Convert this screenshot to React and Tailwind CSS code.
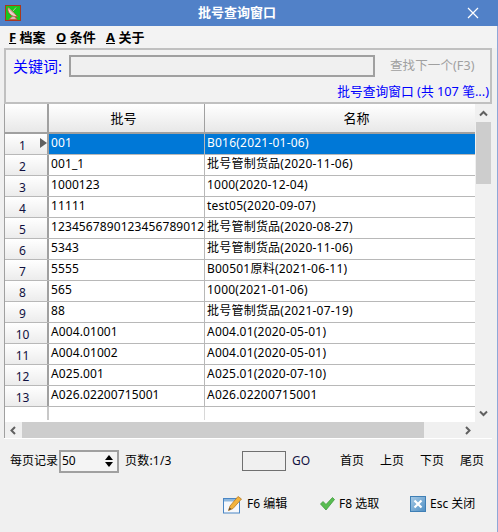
import React from "react";

const rows = [
  ["001", "B016(2021-01-06)"],
  ["001_1", "批号管制货品(2020-11-06)"],
  ["1000123", "1000(2020-12-04)"],
  ["11111", "test05(2020-09-07)"],
  ["1234567890123456789012", "批号管制货品(2020-08-27)"],
  ["5343", "批号管制货品(2020-11-06)"],
  ["5555", "B00501原料(2021-06-11)"],
  ["565", "1000(2021-01-06)"],
  ["88", "批号管制货品(2021-07-19)"],
  ["A004.01001", "A004.01(2020-05-01)"],
  ["A004.01002", "A004.01(2020-05-01)"],
  ["A025.001", "A025.01(2020-07-10)"],
  ["A026.02200715001", "A026.02200715001"],
];

const font = { fontFamily: '"Noto Sans", "Noto Sans CJK SC", sans-serif' };

const DishIcon = () => (
  <svg width="16" height="16" viewBox="0 0 16 16">
    <rect x="0.5" y="0.5" width="15" height="15" fill="#17c81c" stroke="#a8381f" />
    <path d="M3 2.5 C2 7 6 12.5 12.5 11.5 Z" fill="#e6d2cc" stroke="#d0443c" strokeWidth="0.8" />
    <path d="M3.5 3 L9 8.5 M11 2.5 L8 6" stroke="#c9a7a0" strokeWidth="1" fill="none" />
    <path d="M7 11.5 L4 14.5 H12 L10 12" fill="#d8b8b0" stroke="#d0443c" strokeWidth="0.8" />
  </svg>
);

const EditIcon = () => (
  <svg width="19" height="19" viewBox="0 0 19 19">
    <rect x="0.5" y="3.5" width="16" height="14.5" fill="#f6f8fb" stroke="#4a86c4" />
    <rect x="1" y="4" width="15" height="2.5" fill="#8db7de" />
    <path d="M5.5 15.5 L7 11 L15 1.5 L18.5 4 L10 13.5 Z" fill="#f2b33c" stroke="#b87a22" strokeWidth="0.8" />
    <path d="M5.5 15.5 L6.5 12.5 L8.5 14 Z" fill="#5a4a3a" />
  </svg>
);

const CheckIcon = () => (
  <svg width="15" height="14" viewBox="0 0 15 14">
    <path d="M0.5 7 L3 4.5 L6 7.5 L12.5 0.5 L14.5 2.5 L6 13 Z" fill="#58bd50" stroke="#3f9a3c" strokeWidth="0.8" />
  </svg>
);

const CloseBoxIcon = () => (
  <svg width="16" height="16" viewBox="0 0 16 16">
    <defs>
      <linearGradient id="closeBg" x1="0" y1="0" x2="1" y2="1">
        <stop offset="0" stopColor="#a8cbe6" />
        <stop offset="1" stopColor="#4f8fc4" />
      </linearGradient>
    </defs>
    <rect x="0.5" y="0.5" width="15" height="15" fill="url(#closeBg)" stroke="#3f7fb5" />
    <path d="M4.5 4.5 L11.5 11.5 M11.5 4.5 L4.5 11.5" stroke="#fff" strokeWidth="2.2" />
  </svg>
);

const Chevron = ({ d }) => (
  <svg width="9" height="9" viewBox="0 0 9 9">
    <path d={d} fill="none" stroke="#606060" strokeWidth="2" />
  </svg>
);

const MenuItem = ({ k, label, className }) => (
  <span className={`font-bold text-[13px] text-black ${className}`}>
    <span className="underline">{k}</span> {label}
  </span>
);

const App = () => {
  return (
    <div className="w-[498px] h-[532px] bg-[#f0f0f0] flex flex-col overflow-hidden text-xs text-black" style={font}>
      {/* Title bar */}
      <div className="h-[26px] shrink-0 bg-[#5181c8] flex items-center pl-[5px] pr-[19px]">
        <DishIcon />
        <div className="flex-1 text-center text-white font-bold text-[13px] pr-[14px]">批号查询窗口</div>
        <svg width="12" height="12" viewBox="0 0 12 12">
          <path d="M1 1 L11 11 M11 1 L1 11" stroke="#fff" strokeWidth="1.2" />
        </svg>
      </div>

      {/* Body, with the thin blue window edge on the right */}
      <div className="flex-1 flex flex-col min-h-0 border-r border-[#8fa8d8]">
        {/* Menu */}
        <div className="h-[22px] shrink-0 flex items-center pl-[9px] pt-[2px] bg-[#f3f3f3]">
          <MenuItem k="F" label="档案" className="w-[47px]" />
          <MenuItem k="O" label="条件" className="w-[50px]" />
          <MenuItem k="A" label="关于" />
        </div>

        {/* Search box */}
        <div className="h-[56px] shrink-0 ml-1 mr-[5px] border-2 border-[#c0c0c0] bg-[#f2f2f2] pl-[7px] pr-[1px] pt-[5px] flex flex-col">
          <div className="flex items-center h-[22px]">
            <span className="text-[#0000ff] text-[15px] w-[56px]">关键词:</span>
            <div className="w-[306px] h-[22px] border-2 border-[#a0a0a0] bg-[#f0f0f0]" />
            <span className="ml-[15px] text-[#a0a0a0] text-[12.5px] tracking-[0.1px]">查找下一个(F3)</span>
          </div>
          <div className="text-right text-[#0000ff] mt-[6px] text-[12.75px] leading-[17px]">批号查询窗口 (共 107 笔...)</div>
        </div>

        {/* Grid */}
        <div className="h-[334px] shrink-0 ml-1 mr-[5px] border-l border-[#a0a0a0] flex flex-col">
          <div className="flex-1 flex min-h-0">
            <div className="w-[470px] bg-white overflow-hidden">
              <div className="flex h-[30px] border-b-2 border-[#a0a0a0] text-[13px] bg-gradient-to-b from-white to-[#e8e8e8]">
                <div className="w-[44px] border-r-2 border-[#a0a0a0]" />
                <div className="w-[156px] border-r border-[#a0a0a0] flex items-center justify-center pt-[2px] pr-[6px]">批号</div>
                <div className="flex-1 flex items-center justify-center pt-[2px] pl-[33px]">名称</div>
              </div>
              {rows.map((r, i) => (
                <div key={i} className="flex h-[21px] border-b border-[#b8b8b8]">
                  <div className="w-[44px] shrink-0 border-r-2 border-[#a0a0a0] bg-gradient-to-b from-white to-[#ececec] flex items-center pt-[3px] relative">
                    <span className="w-[35px] text-center text-[#101040]">{i + 1}</span>
                    {i === 0 && <span className="absolute left-[35px] top-[4px] w-0 h-0 border-y-[5px] border-y-transparent border-l-[7px] border-l-[#606060]" />}
                  </div>
                  <div className={`w-[156px] shrink-0 border-r border-[#b8b8b8] pl-[2px] leading-[18px] tracking-[0.1px] overflow-hidden whitespace-nowrap ${i === 0 ? "bg-[#0078d7] text-white" : ""}`}>{r[0]}</div>
                  <div className={`flex-1 pl-[2px] leading-[18px] tracking-[0.22px] whitespace-nowrap ${i === 0 ? "bg-[#0078d7] text-white" : ""}`}>{r[1]}</div>
                </div>
              ))}
              <div className="flex h-[13px]">
                <div className="w-[44px] border-r-2 border-[#c8c8c8]" />
                <div className="w-[156px] border-r border-[#d8d8d8]" />
              </div>
            </div>

            {/* Vertical scrollbar */}
            <div className="w-[15px] ml-[1px] bg-[#f0f0f0] flex flex-col items-center">
              <div className="h-[18px] flex items-center justify-center"><Chevron d="M1 6.5 L4.5 3 L8 6.5" /></div>
              <div className="w-full h-[62px] bg-[#cdcdcd]" />
              <div className="flex-1" />
              <div className="h-[18px] flex items-center justify-center"><Chevron d="M1 2.5 L4.5 6 L8 2.5" /></div>
            </div>
          </div>

          {/* Horizontal scrollbar */}
          <div className="h-[16px] flex items-center bg-[#f0f0f0]">
            <div className="w-[17px] flex justify-center"><Chevron d="M6 1 L2.5 4.5 L6 8" /></div>
            <div className="w-[402px] h-full bg-[#cdcdcd]" />
            <div className="flex-1 flex justify-end pr-[4px]"><Chevron d="M3 1 L6.5 4.5 L3 8" /></div>
            <div className="w-[16px] h-full" />
          </div>
        </div>
        <div className="h-[1px] shrink-0 bg-white ml-1 mr-[5px]" />

        {/* Paging */}
        <div className="flex items-center h-[22px] mt-[11px] shrink-0 pl-[10px]">
          <span className="w-[49px]">每页记录</span>
          <div className="w-[60px] h-[23px] border-2 border-[#a0a0a0] flex items-center pl-[1px] bg-[#f4f4f4]">
            <span className="flex-1">50</span>
            <span className="flex flex-col gap-[2px] mr-[4px]">
              <span className="w-0 h-0 border-x-[4px] border-x-transparent border-b-[5px] border-b-black" />
              <span className="w-0 h-0 border-x-[4px] border-x-transparent border-t-[5px] border-t-black" />
            </span>
          </div>
          <span className="ml-[6px] w-[117px] tracking-[0.2px]">页数:1/3</span>
          <div className="w-[44px] h-[20px] border border-[#707070]" />
          <span className="ml-[6px] w-[48px] text-[#101040]">GO</span>
          <span className="w-[40px]">首页</span>
          <span className="w-[40px]">上页</span>
          <span className="w-[40px]">下页</span>
          <span>尾页</span>
        </div>

        {/* Actions */}
        <div className="flex items-center h-[20px] mt-[22px] shrink-0 pl-[223px]">
          <EditIcon />
          <span className="ml-[5px] w-[73px]">F6 编辑</span>
          <CheckIcon />
          <span className="ml-[4px] w-[71px]">F8 选取</span>
          <CloseBoxIcon />
          <span className="ml-[4px]">Esc 关闭</span>
        </div>
      </div>
    </div>
  );
};

export default App;
